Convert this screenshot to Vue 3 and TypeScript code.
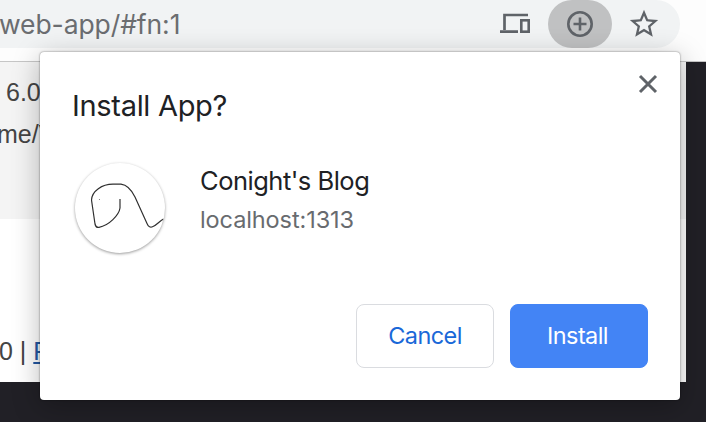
<script setup lang="ts">
import { ref } from 'vue'

const address = 'web-app/#fn:1'
const app = { name: "Conight's Blog", origin: 'localhost:1313' }
const open = ref(true)
</script>

<template>
  <main class="browser">
    <header class="toolbar">
      <div class="omnibox">
        <span class="address">{{ address }}</span>
        <svg class="icon-devices" viewBox="0 0 32 24" aria-hidden="true">
          <path d="M4.5 18V3H28M0 19.7H18" fill="none" stroke="#5f6368" stroke-width="2.7" />
          <rect x="21.3" y="8.3" width="7.4" height="11.4" fill="none" stroke="#5f6368" stroke-width="2.6" />
        </svg>
        <span class="install-chip">
          <svg viewBox="0 0 28 28" aria-hidden="true">
            <g fill="none" stroke="#5f6368" stroke-width="2.6">
              <circle cx="14" cy="14" r="11.7" />
              <path d="M14 7.5V20.5M7.5 14H20.5" />
            </g>
          </svg>
        </span>
        <svg class="icon-star" viewBox="0 0 24 24" aria-hidden="true">
          <path
            fill="#5f6368"
            d="M22 9.24l-7.19-.62L12 2 9.19 8.63 2 9.24l5.46 4.73L5.82 21 12 17.27 18.18 21l-1.63-7.03L22 9.24zM12 15.4l-3.76 2.27 1-4.28-3.32-2.88 4.38-.38L12 6.1l1.71 4.04 4.38.38-3.32 2.88 1 4.28L12 15.4z"
          />
        </svg>
      </div>
    </header>
    <section class="page">
      <div class="content">
        <div class="note">
          <p class="version">6.0</p>
          <p class="path">me/V</p>
        </div>
        <p class="footer">0 | <a>F</a></p>
      </div>
    </section>

    <div v-if="open" class="dialog" role="dialog">
      <div class="heading">
        <h1>Install App?</h1>
        <button class="close" aria-label="Close" @click="open = false">
          <svg viewBox="0 0 20 20"><path d="M2 2L18 18M18 2L2 18" stroke="#5f6368" stroke-width="3" /></svg>
        </button>
      </div>
      <div class="app-info">
        <div class="logo">
          <svg viewBox="0 0 90 90" aria-hidden="true">
            <path
              d="M45 36V45C44 52 34 62.5 24 64.3Q21 65 20 61L16.5 37C17 28 27 21.2 38 21.2H46C53 22 57 28 60 34L72 60.5Q74 65.5 78 63.5C82 62 84 58.5 88.5 56"
              fill="none"
              stroke="#303030"
              stroke-width="1.2"
            />
            <circle cx="24.5" cy="36.5" r=".6" fill="#777" />
          </svg>
        </div>
        <div class="details">
          <span class="name">{{ app.name }}</span>
          <span class="origin">{{ app.origin }}</span>
        </div>
      </div>
      <div class="actions">
        <button class="btn">Cancel</button>
        <button class="btn primary">Install</button>
      </div>
    </div>
  </main>
</template>

<style>
body { overflow: hidden; }
</style>

<style scoped>
* { box-sizing: border-box; }
.browser {
  position: relative;
  display: flex;
  flex-direction: column;
  width: 706px;
  height: 422px;
  overflow: hidden;
  background: #212026;
  font-family: Inter, "Liberation Sans", sans-serif;
}
p, h1 { margin: 0; font-weight: 400; }
svg { display: block; flex: none; }
button { padding: 0; border: 0; background: none; font: inherit; }
.toolbar { height: 62px; flex: none; background: #fdfdfd; border-bottom: 1px solid #c6c6c6; }
.omnibox {
  display: flex;
  align-items: center;
  width: 680px;
  height: 48px;
  background: #f1f3f4;
  border-radius: 0 24px 24px 0;
}
.address { flex: 1; margin-left: -1px; font-size: 26.5px; line-height: 48px; letter-spacing: -0.1px; color: #6b6d70; white-space: nowrap; }
.icon-devices { width: 32px; height: 24px; margin-right: 16px; }
.install-chip {
  display: grid;
  place-items: center;
  width: 64px;
  height: 48px;
  background: #c0c1c2;
  border-radius: 24px;
}
.install-chip svg { width: 28px; height: 28px; }
.icon-star { width: 34px; height: 34px; margin: 0 19px 0 15px; }
.page { flex: 1; }
.content {
  width: 686px;
  height: 320px;
  background: #fff;
  font-family: "Liberation Sans", sans-serif;
  font-size: 25px;
  color: #444;
}
.note { height: 157px; padding-top: 9px; background: #f4f4f4; line-height: 42px; }
.version { padding-left: 6px; }
.path { margin-left: -3px; }
.footer { padding-top: 111px; line-height: 42px; margin-left: -1px; }
.footer a { color: #2457a0; text-decoration: underline; text-decoration-thickness: 2px; text-underline-offset: 2px; }
.dialog {
  position: absolute;
  left: 40px;
  top: 52px;
  width: 640px;
  height: 348px;
  padding: 32px;
  background: #fff;
  border-radius: 4px;
  box-shadow: 0 0 2px rgba(0, 0, 0, .55), 0 6px 28px rgba(0, 0, 0, .28);
}
.heading { display: flex; justify-content: space-between; height: 44px; }
h1 { font-size: 29px; line-height: 44px; letter-spacing: -0.3px; color: #202124; }
.close { width: 20px; height: 20px; margin-top: -10px; margin-right: -10px; }
.close svg { width: 20px; height: 20px; }
.app-info { display: flex; height: 90px; margin-top: 36px; padding-left: 3px; }
.logo {
  width: 90px;
  height: 90px;
  margin-top: -1px;
  border-radius: 50%;
  overflow: hidden;
  box-shadow: 0 1px 3px rgba(0, 0, 0, .4);
}
.details { display: flex; flex-direction: column; align-items: flex-start; margin-left: 35px; }
.name { font-size: 25.5px; line-height: 34px; color: #202124; letter-spacing: -0.5px; }
.origin { margin-top: 5px; font-size: 23.5px; line-height: 34px; color: #686b6f; letter-spacing: -0.1px; }
.actions { display: flex; justify-content: flex-end; gap: 16px; margin-top: 50px; }
.btn { width: 138px; height: 64px; padding-bottom: 2px; border: 1px solid #dadce0; border-radius: 8px; color: #1a68d8; font-size: 23.5px; letter-spacing: -0.6px; }
.primary { padding-right: 3px; background: #4384f5; border-color: #4384f5; color: #fff; }
</style>
